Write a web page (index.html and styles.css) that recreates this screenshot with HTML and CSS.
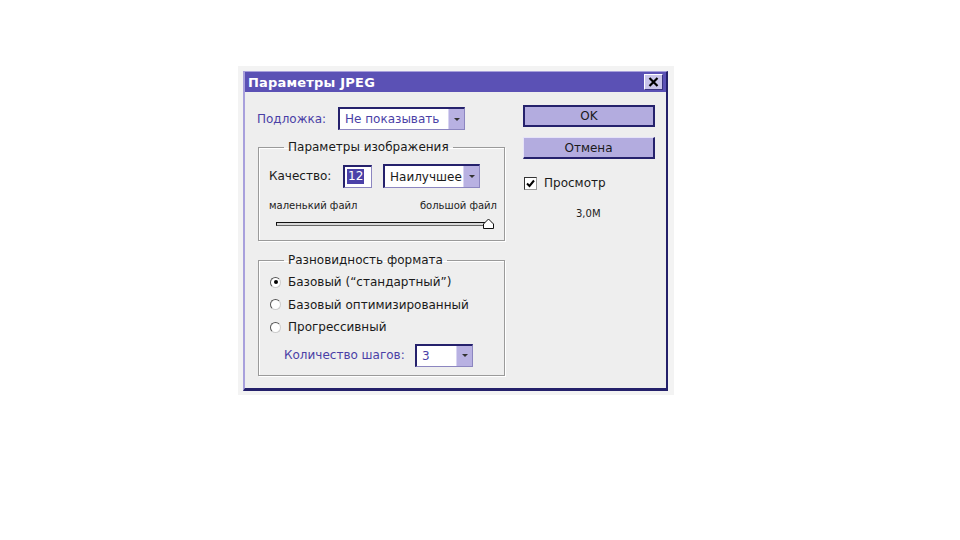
FILE: index.html
```html
<!DOCTYPE html>
<html lang="ru">
<head>
<meta charset="utf-8">
<title>Параметры JPEG</title>
<link rel="stylesheet" href="styles.css">
</head>
<body>
<div class="frame">
  <div class="dialog">
    <div class="titlebar">
      <span class="title">Параметры JPEG</span>
      <span class="close"><svg width="11" height="10" viewBox="0 0 11 10"><path d="M1.5 1 L9.5 9 M9.5 1 L1.5 9" stroke="#000" stroke-width="2.2"/></svg></span>
    </div>
    <div class="body">
      <div class="left">
        <div class="row matte">
          <span class="lbl purple">Подложка:</span>
          <div class="select sel-matte"><span class="val purple">Не показывать</span><span class="arrow"><i></i></span></div>
        </div>
        <fieldset class="group g1">
          <legend>Параметры изображения</legend>
          <div class="row quality">
            <span class="lbl">Качество:</span>
            <div class="num"><span class="hl">12</span></div>
            <div class="select sel-q"><span class="val">Наилучшее</span><span class="arrow"><i></i></span></div>
          </div>
          <div class="scale"><span>маленький файл</span><span>большой файл</span></div>
          <div class="slider"><div class="track"></div><svg class="thumb" width="11" height="11" viewBox="0 0 11 11"><path d="M0.5 10.5 L0.5 6 L5.5 1 L10.5 6 L10.5 10.5 Z" fill="#fff" stroke="#111"/></svg></div>
        </fieldset>
        <fieldset class="group g2">
          <legend>Разновидность формата</legend>
          <div class="radio"><span class="rb on"></span>Базовый (“стандартный”)</div>
          <div class="radio"><span class="rb"></span>Базовый оптимизированный</div>
          <div class="radio"><span class="rb"></span>Прогрессивный</div>
          <div class="row steps">
            <span class="lbl purple">Количество шагов:</span>
            <div class="select sel-s"><span class="val purple">3</span><span class="arrow"><i></i></span></div>
          </div>
        </fieldset>
      </div>
      <div class="right">
        <div class="btn default">OK</div>
        <div class="btn">Отмена</div>
        <div class="check"><span class="cb"><svg width="9" height="9" viewBox="0 0 9 9"><path d="M1 4.5 L3.5 7 L8 1.5" fill="none" stroke="#000" stroke-width="2"/></svg></span>Просмотр</div>
        <div class="size">3,0M</div>
      </div>
    </div>
  </div>
</div>
</body>
</html>
```
FILE: styles.css
```css
* { box-sizing: border-box; }
html, body { margin: 0; padding: 0; background: #fff; }
body { font-family: "DejaVu Sans", Tahoma, sans-serif; font-size: 12px; color: #1a1a1a; }

.frame {
  margin: 66px 0 0 238px;
  width: 436px;
  height: 329px;
  background: #f3f3f3;
  padding: 5px 6px 4px 5px;
}
.dialog {
  width: 425px;
  height: 320px;
  background: #eeeeee;
  border-left: 2px solid #a8a0dc;
  border-top: 1px solid #a8a0dc;
  border-right: 2px solid #24206a;
  border-bottom: 3px solid #24206a;
  display: flex;
  flex-direction: column;
}
.titlebar {
  height: 20px;
  background: #5b51b5;
  display: flex;
  align-items: center;
  justify-content: space-between;
  padding: 0 3px 0 3px;
}
.title { color: #fff; font-weight: bold; font-size: 13px; letter-spacing: 0.2px; }
.close {
  width: 19px; height: 16px;
  background: #c9c4ea;
  border-top: 1px solid #fff; border-left: 1px solid #fff;
  border-right: 1px solid #3a3480; border-bottom: 1px solid #3a3480;
  display: flex; align-items: center; justify-content: center;
}

.body { display: flex; padding: 13px 0 0 13px; }
.left { width: 247px; padding-top: 2px; }
.right { margin-left: 18px; width: 132px; display: flex; flex-direction: column; }

.purple { color: #4a3fa6; }
.row { display: flex; align-items: center; }
.lbl { white-space: nowrap; }

.select {
  display: flex; align-items: stretch;
  background: #fff;
  border-top: 2px solid #25216c; border-left: 2px solid #25216c;
  border-right: 1px solid #8c86c0; border-bottom: 1px solid #8c86c0;
}
.select .val { flex: 1; padding-left: 5px; display: flex; align-items: center; white-space: nowrap; overflow: hidden; }
.select .arrow {
  width: 16px; background: #b8b1e2;
  border-left: 1px solid #d8d4f2;
  display: flex; align-items: center; justify-content: center;
}
.select .arrow i { width: 0; height: 0; border-left: 3px solid transparent; border-right: 3px solid transparent; border-top: 3px solid #333; }

.matte .lbl { margin-left: -1px; width: 81px; }
.sel-matte { width: 127px; height: 23px; }

.group {
  margin: 0; padding: 0 0 0 10px;
  border: 1px solid #9a9a9a;
  box-shadow: inset 1px 1px 0 #fff, 1px 1px 0 #fff;
}
.group legend { margin-left: 15px; padding: 0 4px; font-size: 12px; line-height: 14px; }
.g1 { margin-top: 10px; height: 101px; }
.g2 { margin-top: 12px; height: 123px; }

.quality { margin-top: 10px; }
.quality .lbl { width: 74px; }
.num {
  width: 29px; height: 23px; background: #fff;
  border-top: 2px solid #25216c; border-left: 2px solid #25216c;
  border-right: 1px solid #8c86c0; border-bottom: 1px solid #8c86c0;
  display: flex; align-items: center; padding-left: 2px;
}
.hl { background: #4b41a8; color: #fff; line-height: 15px; padding: 0 1px; }
.sel-q { width: 97px; height: 24px; margin-left: 11px; }

.scale { display: flex; justify-content: space-between; width: 228px; font-size: 10px; margin-top: 12px; color: #222; }
.slider { position: relative; width: 226px; height: 12px; margin: 7px 0 0 7px; }
.slider .track { position: absolute; left: 0; top: 4px; width: 216px; height: 4px; border: 1px solid #111; border-bottom-color: #666; background: #d8d8d8; }
.slider .thumb { position: absolute; left: 207px; top: 0; }

.radio { display: flex; align-items: center; height: 22.5px; margin-left: 1px; }
.radio:first-of-type { margin-top: 4px; }
.rb {
  width: 11px; height: 11px; border-radius: 50%;
  background: #fff;
  border: 1px solid #555; border-bottom-color: #ccc; border-right-color: #ccc;
  margin-right: 7px; position: relative;
}
.rb.on::after { content: ""; position: absolute; left: 2.5px; top: 2.5px; width: 4px; height: 4px; border-radius: 50%; background: #000; }
.steps { margin-top: 5px; margin-left: 15px; }
.steps .lbl { width: 131px; }
.sel-s { width: 58px; height: 23px; }

.btn {
  height: 22px; background: #b3acdf;
  display: flex; align-items: center; justify-content: center;
  border-top: 1px solid #e6e3f8; border-left: 1px solid #e6e3f8;
  border-right: 2px solid #25216c; border-bottom: 2px solid #25216c;
  font-size: 12px;
}
.btn.default { border: 2px solid #25216c; }
.btn + .btn { margin-top: 10px; }
.check { display: flex; align-items: center; margin-top: 17px; margin-left: 1px; }
.cb {
  width: 13px; height: 13px; background: #fff;
  border: 1px solid #333; border-bottom-color: #999; border-right-color: #999;
  margin-right: 7px; display: flex; align-items: center; justify-content: center;
}
.size { font-size: 10px; margin-top: 18px; margin-left: 53px; color: #222; }
```
